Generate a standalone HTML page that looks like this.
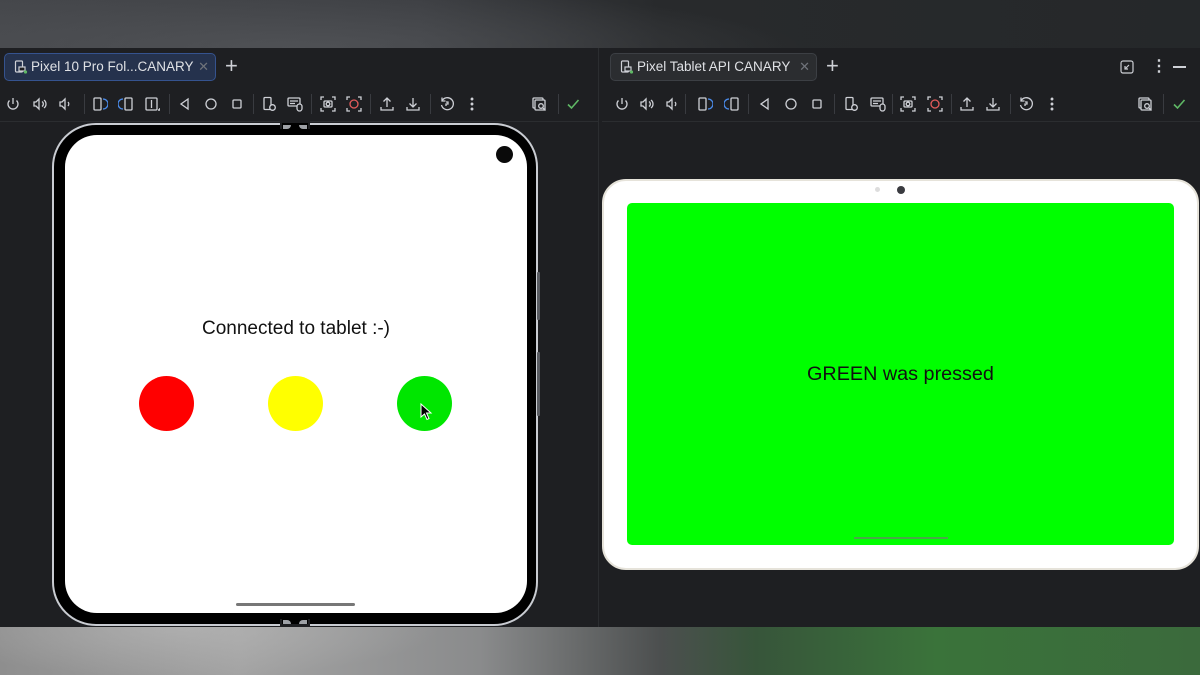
<!DOCTYPE html>
<html><head><meta charset="utf-8"><style>
*{margin:0;padding:0;box-sizing:border-box}
body{width:1200px;height:675px;overflow:hidden;background:#1e1f22;font-family:"Liberation Sans",sans-serif;position:relative}
.abs{position:absolute}
.top{left:0;top:0;width:1200px;height:48px;background:linear-gradient(90deg,#45474b 0%,#3c3e42 35%,#282a2c 55%,#25282a 100%)}
.top2{left:0;top:0;width:1200px;height:48px;background:radial-gradient(ellipse 500px 60px at 300px 48px,rgba(90,92,96,.6),rgba(0,0,0,0))}
.bot{left:0;top:627px;width:1200px;height:48px;background:linear-gradient(90deg,#8e8e8e 0%,#a3a3a3 20%,#8a8b8c 40%,#4c4f4f 55%,#37553a 63%,#3a733a 78%,#3b6a3c 100%)}
.bot2{left:0;top:627px;width:1200px;height:48px;background:radial-gradient(ellipse 260px 50px at 180px 0px,rgba(190,190,190,.5),rgba(0,0,0,0))}
.pane{top:48px;height:579px;background:#1e1f22}
.tab{top:53px;height:28px;border-radius:5px;color:#dfe1e5;font-size:13.5px;line-height:26px;padding-left:26px}
.tab .x{position:absolute;right:6px;top:0;color:#6f737a;font-size:13px}
.plus{color:#ced0d6;font-size:22px;top:53px;line-height:26px;font-weight:300}
.sep{top:94px;width:1px;height:20px;background:#393b40}
svg.i{position:absolute;top:96px;width:16px;height:16px;fill:none;stroke:#ced0d6;stroke-width:1.3}
</style></head><body>
<div class="abs top"></div><div class="abs top2"></div>
<div class="abs pane" style="left:0;width:598px"></div>
<div class="abs pane" style="left:599px;width:601px"></div>
<div class="abs" style="left:598px;top:48px;width:1px;height:579px;background:#2b2d30"></div>
<div class="abs" style="left:0;top:121px;width:598px;height:1px;background:#2b2d30"></div>
<div class="abs" style="left:602px;top:121px;width:598px;height:1px;background:#2b2d30"></div>

<div class="abs tab" style="left:4px;width:212px;background:#25324d;border:1px solid #35538f">
<svg class="abs" style="left:9px;top:6px" width="14" height="14" viewBox="0 0 14 14" fill="none" stroke="#ced0d6" stroke-width="1.2"><rect x="1.5" y="1" width="7" height="11" rx="1"/><rect x="5" y="7" width="6" height="4" fill="#1e1f22"/><circle cx="11.5" cy="12" r="1.6" fill="#5fb865" stroke="none"/></svg>
Pixel 10 Pro Fol...CANARY<span class="x">✕</span></div>
<div class="abs plus" style="left:225px">+</div>
<div class="abs tab" style="left:610px;width:207px;background:#2b2d30;border:1px solid #3c3f44">
<svg class="abs" style="left:9px;top:6px" width="14" height="14" viewBox="0 0 14 14" fill="none" stroke="#ced0d6" stroke-width="1.2"><rect x="1.5" y="1" width="7" height="11" rx="1"/><rect x="5" y="7" width="6" height="4" fill="#2b2d30"/><circle cx="11.5" cy="12" r="1.6" fill="#5fb865" stroke="none"/></svg>
Pixel Tablet API CANARY<span class="x">✕</span></div>
<div class="abs plus" style="left:826px">+</div>
<svg class="abs" style="left:1120px;top:60px" width="14" height="14" viewBox="0 0 14 14" fill="none" stroke="#ced0d6" stroke-width="1.2"><rect x="1" y="1" width="12" height="12" rx="2"/><path d="M9 5L5 9M5 6v3h3"/></svg>
<div class="abs" style="left:1151px;top:58px;color:#ced0d6;font-size:16px;font-weight:bold;line-height:18px">⋮</div>
<div class="abs" style="left:1173px;top:66px;width:13px;height:1.5px;background:#ced0d6"></div>

<div id="tb"></div>
<script>
const icons={
pw:'<path d="M8 2v6"/><path d="M4.5 4.5a5 5 0 1 0 7 0"/>',
vu:'<path d="M2 6h2l3-3v10l-3-3H2z"/><path d="M10 5.5a3 3 0 0 1 0 5M12 4a5 5 0 0 1 0 8"/>',
vd:'<path d="M3 6h2l3-3v10l-3-3H3z"/><path d="M11 6a3 3 0 0 1 0 4"/>',
rl:'<rect x="2" y="2" width="7" height="12" rx="1"/><path d="M11 3a5 5 0 0 1 0 10" stroke="#4b8dee"/>',
rr:'<rect x="7" y="2" width="7" height="12" rx="1"/><path d="M5 3a5 5 0 0 0 0 10" stroke="#4b8dee"/>',
fd:'<rect x="2" y="2" width="11" height="12" rx="1"/><path d="M7.5 4v8"/><path d="M14 14h2v-2" stroke-width="1.6"/>',
bk:'<path d="M11 3L4 8l7 5z"/>',
hm:'<circle cx="8" cy="8" r="5"/>',
rc:'<rect x="4" y="4" width="8" height="8" rx="1"/>',
ds:'<rect x="3" y="1.5" width="7" height="12" rx="1"/><circle cx="11.5" cy="11.5" r="2.8" fill="#1e1f22"/>',
kb:'<rect x="1" y="2" width="12" height="8" rx="1"/><path d="M3 5h8M3 7.5h5"/><rect x="10" y="8" width="5" height="7" rx="2.5" fill="#1e1f22"/>',
sc:'<path d="M1 4V1h3M12 1h3v3M15 12v3h-3M4 15H1v-3"/><rect x="4" y="5" width="8" height="6" rx="1"/><circle cx="8" cy="8" r="1.8"/>',
rec:'<path d="M1 4V1h3M12 1h3v3M15 12v3h-3M4 15H1v-3"/><circle cx="8" cy="8" r="4" stroke="#e55b5b"/>',
up:'<path d="M8 11V2M4.5 5.5L8 2l3.5 3.5M2 11v3h12v-3"/>',
dn:'<path d="M8 2v9M4.5 7.5L8 11l3.5-3.5M2 11v3h12v-3"/>',
rs:'<path d="M3 5a6 6 0 1 1-.5 4"/><path d="M3 1.5V5h3.5"/><path d="M7 6h2v2H7v2"/>',
mr:'<circle cx="8" cy="3" r=".8" fill="#ced0d6"/><circle cx="8" cy="8" r=".8" fill="#ced0d6"/><circle cx="8" cy="13" r=".8" fill="#ced0d6"/>',
dv:'<rect x="2" y="2" width="10" height="10" rx="1"/><rect x="4" y="4" width="10" height="10" rx="1" fill="#1e1f22"/><circle cx="10" cy="10" r="2.3"/><path d="M12 12l2.5 2.5"/>',
ok:'<path d="M3 8.5l3.5 3.5L13.5 4" stroke="#5fb865" stroke-width="1.6"/>'
};
const L=[['pw',13],['vu',40],['vd',65],['rl',100],['rr',126],['fd',152],['bk',185],['hm',211],['rc',237],['ds',269],['kb',295],['sc',328],['rec',354],['up',387],['dn',413],['rs',447],['mr',472],['dv',539],['ok',573]];
const R=[['pw',622],['vu',647],['vd',672],['rl',705],['rr',732],['bk',765],['hm',791],['rc',817],['ds',851],['kb',878],['sc',908],['rec',935],['up',967],['dn',993],['rs',1026],['mr',1052],['dv',1145],['ok',1179]];
let h='';
for(const [k,x] of L.concat(R)) h+=`<svg class="i" style="left:${x-8}px" viewBox="0 0 16 16">${icons[k]}</svg>`;
for(const x of [84,169,253,311,370,430,558,685,748,834,892,951,1010,1163]) h+=`<div class="abs sep" style="left:${x}px"></div>`;
document.getElementById('tb').innerHTML=h;
</script>

<div class="abs" style="left:52px;top:123px;width:486px;height:503px;border-radius:44px;background:#000;border:2px solid #c9ccd2"></div>
<div class="abs" style="left:280px;top:121px;width:30px;height:8px;background:#1e1f22"></div>
<div class="abs" style="left:282px;top:123px;width:26px;height:14px;background:#000;border-radius:0 0 3px 3px"></div>
<div class="abs" style="left:283px;top:125px;width:8px;height:4px;background:#9ea1a6;border-radius:0 0 6px 0"></div>
<div class="abs" style="left:299px;top:125px;width:8px;height:4px;background:#9ea1a6;border-radius:0 0 0 6px"></div>
<div class="abs" style="left:280px;top:619px;width:30px;height:9px;background:#1e1f22"></div>
<div class="abs" style="left:282px;top:612px;width:26px;height:12px;background:#000"></div>
<div class="abs" style="left:283px;top:620px;width:8px;height:4px;background:#9ea1a6;border-radius:0 6px 0 0"></div>
<div class="abs" style="left:299px;top:620px;width:8px;height:4px;background:#9ea1a6;border-radius:6px 0 0 0"></div>
<div class="abs" style="left:537px;top:272px;width:3px;height:48px;background:#5a5d63;border-radius:1px"></div>
<div class="abs" style="left:537px;top:352px;width:3px;height:64px;background:#5a5d63;border-radius:1px"></div>
<div class="abs" style="left:65px;top:135px;width:462px;height:478px;border-radius:32px;background:#fff"></div>
<div class="abs" style="left:496px;top:146px;width:17px;height:17px;border-radius:50%;background:#0a0a0a"></div>
<div class="abs" style="left:65px;top:318px;width:462px;text-align:center;font-size:19px;color:#111">Connected to tablet :-)</div>
<div class="abs" style="left:139px;top:376px;width:55px;height:55px;border-radius:50%;background:#ff0000"></div>
<div class="abs" style="left:268px;top:376px;width:55px;height:55px;border-radius:50%;background:#ffff00"></div>
<div class="abs" style="left:397px;top:376px;width:55px;height:55px;border-radius:50%;background:#00e600"></div>
<svg class="abs" style="left:420px;top:403px" width="14" height="18" viewBox="0 0 14 18"><path d="M1 1v13l3.5-3 2.5 5.5 2-1-2.5-5.5H11z" fill="#000" stroke="#fff" stroke-width="1"/></svg>
<div class="abs" style="left:236px;top:603px;width:119px;height:3px;background:#777;border-radius:2px"></div>

<div class="abs" style="left:602px;top:179px;width:597px;height:391px;border-radius:24px;background:#fff;border:2px solid #e6e3da"></div>
<div class="abs" style="left:875px;top:187px;width:5px;height:5px;border-radius:50%;background:#ddd"></div>
<div class="abs" style="left:897px;top:186px;width:8px;height:8px;border-radius:50%;background:#3a3b40"></div>
<div class="abs" style="left:627px;top:203px;width:547px;height:342px;border-radius:5px;background:#00ff00"></div>
<div class="abs" style="left:627px;top:363px;width:547px;text-align:center;font-size:19.8px;color:#111">GREEN was pressed</div>
<div class="abs" style="left:854px;top:537px;width:94px;height:2px;background:#4aa84a"></div>

<div class="abs bot"></div><div class="abs bot2"></div>
</body></html>
